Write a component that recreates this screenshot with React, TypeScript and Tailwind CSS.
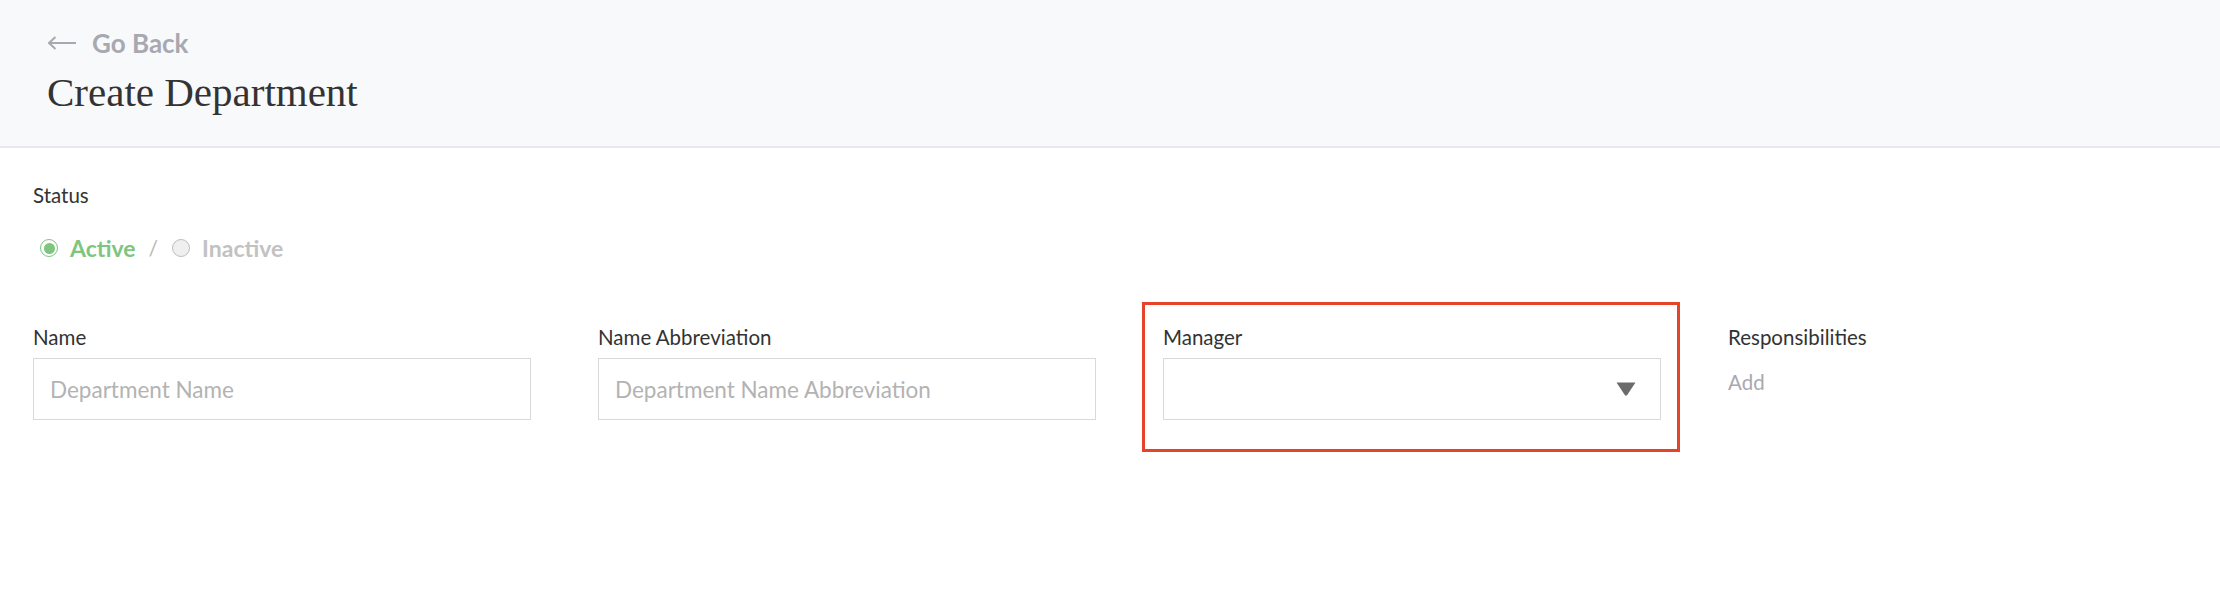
import React from "react";

const sans = "font-['Lato','Open_Sans',sans-serif]";

const Field = ({ label, placeholder }: { label: string; placeholder: string }) => (
  <div className="flex flex-col w-[498px]">
    <label className="text-[20.5px] leading-[24px] text-[#333333]">{label}</label>
    <input
      className="mt-[9px] h-[62px] w-full border border-[#d9d9d9] px-[16px] text-[22.5px] text-[#333] placeholder:text-[#b3b3b3] outline-none"
      placeholder={placeholder}
    />
  </div>
);

const App = () => {
  return (
    <div className={`min-h-[596px] bg-white ${sans}`}>
      {/* Header */}
      <div className="h-[148px] bg-[#f8f9fb] border-b-2 border-[#e8e8ee] px-[47px] pt-[26px]">
        <a href="#" className="flex items-center gap-[15px] text-[#a8a8b0]">
          <svg width="29" height="14" viewBox="0 0 29 14" fill="none" className="ml-[1px]">
            <path d="M1 7H28" stroke="#a8a8b0" strokeWidth="2" />
            <path d="M7.5 1L1 7L7.5 13" stroke="#a8a8b0" strokeWidth="2" fill="none" />
          </svg>
          <span className="text-[26px] leading-[34px] font-bold">Go Back</span>
        </a>
        <h1 className="mt-[8px] font-['Liberation_Serif',serif] text-[41px] leading-[48px] text-[#333333]">
          Create Department
        </h1>
      </div>

      {/* Body */}
      <div className="px-[33px] pt-[35px]">
        <div className="text-[20.5px] leading-[24px] text-[#333333]">Status</div>
        <div className="mt-[25px] flex items-center pl-[7px] leading-[32px]">
          <span className="flex h-[18px] w-[18px] items-center justify-center rounded-full border border-[#7ec580] bg-white">
            <span className="h-[11px] w-[11px] rounded-full bg-[#7ec580]" />
          </span>
          <span className="ml-[12px] text-[23px] font-bold text-[#7ec580]">Active</span>
          <span className="ml-[13px] text-[21px] text-[#b8b8b8]">/</span>
          <span className="ml-[14px] h-[18px] w-[18px] rounded-full border border-[#bdbdbd] bg-[#efefef]" />
          <span className="ml-[12px] text-[23px] font-bold text-[#c2c2c2]">Inactive</span>
        </div>

        <div className="mt-[61px] flex gap-[67px]">
          <Field label="Name" placeholder="Department Name" />
          <Field label="Name Abbreviation" placeholder="Department Name Abbreviation" />

          <div className="relative flex flex-col w-[498px]">
            {/* highlight annotation */}
            <div className="pointer-events-none absolute left-[-21px] top-[-23px] h-[150px] w-[538px] border-[3px] border-[#e5432a]" />
            <label className="text-[20.5px] leading-[24px] text-[#333333]">Manager</label>
            <div className="mt-[9px] flex h-[62px] w-full items-center justify-end border border-[#d9d9d9] pr-[24px]">
              <svg width="20" height="14" viewBox="0 0 20 14">
                <path d="M0.5 0.5H19.5L11.2 13Q10 14.4 8.8 13Z" fill="#6b6b6b" />
              </svg>
            </div>
          </div>

          <div className="flex flex-col">
            <label className="text-[20.5px] leading-[24px] text-[#333333]">Responsibilities</label>
            <span className="mt-[21px] text-[20.5px] leading-[24px] text-[#a9a9b0] cursor-pointer">Add</span>
          </div>
        </div>
      </div>
    </div>
  );
};

export default App;
